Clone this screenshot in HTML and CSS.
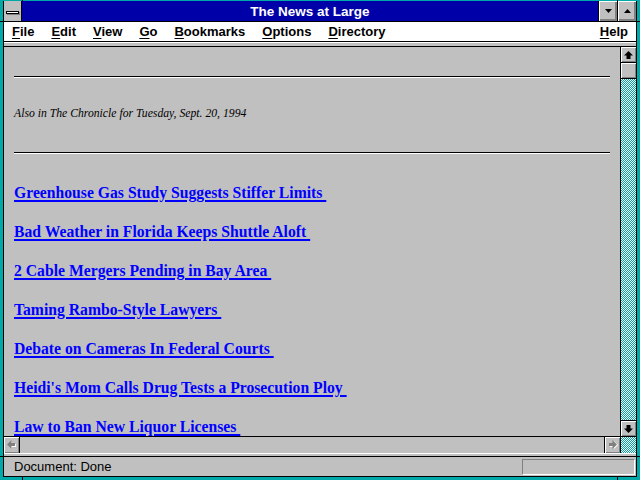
FILE: index.html
```html
<!DOCTYPE html>
<html>
<head>
<meta charset="utf-8">
<title>The News at Large</title>
<link rel="stylesheet" href="styles.css">
</head>
<body>
<div class="win">
  <div class="titlebar">
    <div class="sysbox"><span class="sysbar"></span></div>
    <div class="title">The News at Large</div>
    <div class="tbtn"><svg width="7" height="4" viewBox="0 0 7 4"><polygon points="0,0 7,0 3.5,4" fill="#000"/></svg></div>
    <div class="tbtn"><svg width="7" height="4" viewBox="0 0 7 4"><polygon points="0,4 7,4 3.5,0" fill="#000"/></svg></div>
  </div>
  <div class="menubar">
    <span class="mi"><u>F</u>ile</span>
    <span class="mi"><u>E</u>dit</span>
    <span class="mi"><u>V</u>iew</span>
    <span class="mi"><u>G</u>o</span>
    <span class="mi"><u>B</u>ookmarks</span>
    <span class="mi"><u>O</u>ptions</span>
    <span class="mi"><u>D</u>irectory</span>
    <span class="mi help"><u>H</u>elp</span>
  </div>
  <div class="toolstrip"></div>
  <div class="viewport">
    <div class="page">
      <hr class="rule">
      <p class="also">Also in The Chronicle for Tuesday, Sept. 20, 1994</p>
      <hr class="rule rule2">
      <ul class="links">
        <li><a href="#">Greenhouse Gas Study Suggests Stiffer Limits&nbsp;</a></li>
        <li><a href="#">Bad Weather in Florida Keeps Shuttle Aloft&nbsp;</a></li>
        <li><a href="#">2 Cable Mergers Pending in Bay Area&nbsp;</a></li>
        <li><a href="#">Taming Rambo-Style Lawyers&nbsp;</a></li>
        <li><a href="#">Debate on Cameras In Federal Courts&nbsp;</a></li>
        <li><a href="#">Heidi's Mom Calls Drug Tests a Prosecution Ploy&nbsp;</a></li>
        <li><a href="#">Law to Ban New Liquor Licenses&nbsp;</a></li>
      </ul>
    </div>
    <div class="vscroll">
      <div class="sbtn up"><svg width="9" height="8" viewBox="0 0 9 8"><polygon points="4.5,0 9,4.5 6.5,4.5 6.5,8 2.5,8 2.5,4.5 0,4.5" fill="#000"/></svg></div>
      <div class="thumb"></div>
      <div class="track"></div>
      <div class="sbtn down"><svg width="9" height="8" viewBox="0 0 9 8"><polygon points="4.5,8 9,3.5 6.5,3.5 6.5,0 2.5,0 2.5,3.5 0,3.5" fill="#000"/></svg></div>
    </div>
  </div>
  <div class="hscroll">
    <div class="hbtn left"><svg width="10" height="10" viewBox="0 0 10 10"><polygon points="1,5 5,1 5,4 9,4 9,7 5,7 5,9" fill="#fff"/><polygon points="0,4.5 4.5,0 4.5,3 8,3 8,6 4.5,6 4.5,9" fill="#808080"/></svg></div>
    <div class="htrack"></div>
    <div class="hbtn right"><svg width="10" height="10" viewBox="0 0 10 10"><polygon points="10,5 6,1 6,4 2,4 2,7 6,7 6,9" fill="#fff"/><polygon points="9,4.5 4.5,0 4.5,3 1,3 1,6 4.5,6 4.5,9" fill="#808080"/></svg></div>
    <div class="corner"></div>
  </div>
  <div class="sep"></div>
  <div class="status">
    <span class="st-text">Document: Done</span>
    <div class="st-box"></div>
  </div>
</div>
</body>
</html>
```
FILE: styles.css
```css
html, body {
  margin: 0;
}

body {
  width: 640px;
  height: 480px;
  box-sizing: border-box;
  padding: 1px 3px 0;
  overflow: hidden;
  background:
    linear-gradient(#000, #000) 22px 0 / 1px 1px no-repeat,
    linear-gradient(#000, #000) 617px 0 / 1px 1px no-repeat,
    linear-gradient(#000, #000) 22px 477px / 1px 3px no-repeat,
    linear-gradient(#000, #000) 617px 477px / 1px 3px no-repeat,
    linear-gradient(#000, #000) 0 21px / 3px 1px no-repeat,
    linear-gradient(#000, #000) 637px 21px / 3px 1px no-repeat,
    linear-gradient(#000, #000) 0 456px / 3px 1px no-repeat,
    linear-gradient(#000, #000) 637px 456px / 3px 1px no-repeat,
    #00a8a8;
}

.win {
  width: 634px;
  height: 476px;
  box-sizing: border-box;
  border: 1px solid #000;
  border-top: 0;
  display: flex;
  flex-direction: column;
  background: #c0c0c0;
}

/* Title bar */
.titlebar {
  height: 20px;
  flex: none;
  display: flex;
  background: #0000a8;
  border-bottom: 1px solid #000;
}

.sysbox {
  width: 17px;
  border-right: 1px solid #000;
  background: #c0c0c0;
  display: flex;
  align-items: center;
  justify-content: center;
}

.sysbar {
  display: block;
  width: 11px;
  height: 1px;
  background: #fff;
  border: 1px solid #000;
  box-shadow: 1px 1px 0 #808080;
  margin-top: 2px;
}

.title {
  flex: 1;
  color: #fff;
  font: bold 13.5px/18px "Liberation Sans", Arial, sans-serif;
  text-align: center;
  padding-top: 2px;
}

.tbtn {
  width: 18px;
  border-left: 1px solid #000;
  background: #c0c0c0;
  box-shadow: inset 1px 1px 0 #fff, inset -1px -1px 0 #808080, inset -2px -2px 0 #808080;
  display: flex;
  align-items: center;
  justify-content: center;
}

/* Menu bar */
.menubar {
  height: 19px;
  flex: none;
  background: #fff;
  border-bottom: 1px solid #000;
  display: flex;
  gap: 17px;
  padding: 0 8px;
  font: bold 13px/20px "Liberation Sans", Arial, sans-serif;
  color: #000;
}

.mi u {
  text-decoration-thickness: 1px;
  text-underline-offset: 2px;
}

.help {
  margin-left: auto;
}

.toolstrip {
  height: 3px;
  flex: none;
  border-top: 1px solid #fff;
  border-bottom: 1px solid #000;
  background: #c0c0c0;
}

/* Viewport */
.viewport {
  height: 389px;
  flex: none;
  display: flex;
}

.page {
  flex: 1;
  overflow: hidden;
  padding: 29px 10px 0;
  background: #c0c0c0;
}

.rule {
  margin: 0;
  height: 0;
  border: 0;
  border-top: 1px solid #000;
  border-bottom: 1px solid #fff;
}

.rule2 {
  margin-top: 31px;
}

.also {
  margin: 29px 0 0;
  font: italic 11.7px/14px "Liberation Serif", "Times New Roman", serif;
  color: #000;
}

.links {
  list-style: none;
  margin: 29px 0 0;
  padding: 0;
}

.links li {
  font: bold 15.7px/19px "Liberation Serif", "Times New Roman", serif;
  margin-bottom: 20px;
}

.links a {
  color: #0000ff;
  text-decoration: underline;
  text-decoration-thickness: 2px;
  text-underline-offset: 2px;
}

/* Scrollbars */
.vscroll {
  width: 15px;
  border-left: 1px solid #000;
  display: flex;
  flex-direction: column;
}

.sbtn, .thumb {
  height: 15px;
  flex: none;
  background: #c0c0c0;
  box-shadow: inset 1px 1px 0 #fff, inset -1px -1px 0 #808080;
  display: flex;
  align-items: center;
  justify-content: center;
}

.sbtn.up, .thumb {
  border-bottom: 1px solid #000;
}

.sbtn.down {
  border-top: 1px solid #000;
}

.track, .corner {
  background: repeating-conic-gradient(#00a8a8 0 25%, #fff 0 50%) 0 0 / 2px 2px;
}

.track {
  flex: 1;
}

.hscroll {
  height: 16px;
  flex: none;
  border-top: 1px solid #000;
  display: flex;
}

.hbtn {
  width: 15px;
  background: #c0c0c0;
  box-shadow: inset 1px 1px 0 #fff, inset -1px -1px 0 #808080;
  display: flex;
  align-items: center;
  justify-content: center;
}

.hbtn.left {
  border-right: 1px solid #000;
}

.hbtn.right {
  border-left: 1px solid #000;
}

.htrack {
  flex: 1;
  background: #c0c0c0;
}

.corner {
  width: 15px;
  border-left: 1px solid #000;
}

.sep {
  height: 2px;
  flex: none;
  border-top: 1px solid #fff;
  border-bottom: 1px solid #000;
  background: #c0c0c0;
}

/* Status bar */
.status {
  height: 19px;
  flex: none;
  display: flex;
  align-items: flex-start;
  background: #c0c0c0;
}

.st-text {
  flex: 1;
  padding-left: 10px;
  font: 13px/19px "Liberation Sans", Arial, sans-serif;
  color: #000;
}

.st-box {
  width: 111px;
  height: 14px;
  margin: 2px 1px 0 0;
  border-top: 1px solid #808080;
  border-left: 1px solid #808080;
  border-bottom: 1px solid #fff;
  border-right: 1px solid #fff;
  background: #c0c0c0;
}
```
